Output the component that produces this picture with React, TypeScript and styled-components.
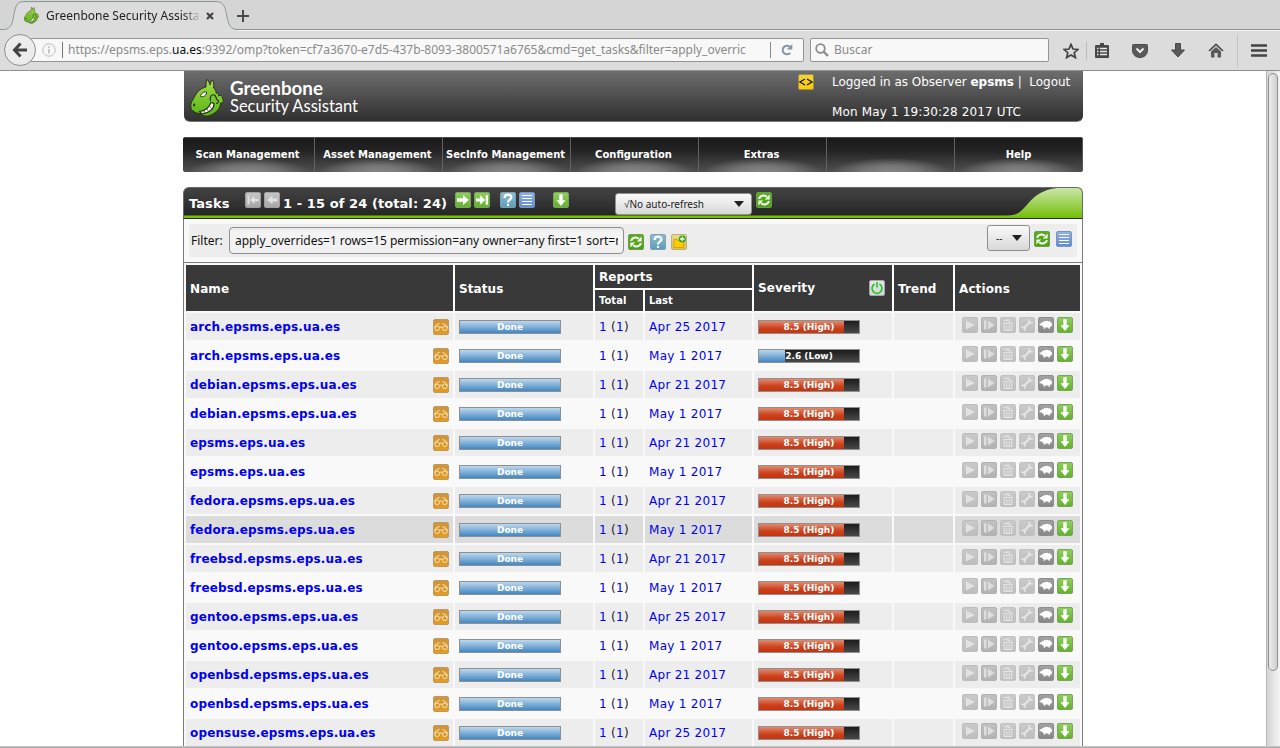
import React from "react";
import styled, { createGlobalStyle } from "styled-components";

const Global = createGlobalStyle`
  * { box-sizing: border-box; }
  html, body { margin: 0; padding: 0; overflow: hidden; background: #fff; }
  body { font-family: "DejaVu Sans", Verdana, sans-serif; font-size: 12px; color: #111; }
`;

const Window = styled.div`
  width: 1280px;
  height: 748px;
  overflow: hidden;
  display: flex;
  flex-direction: column;
`;

/* ---------- browser chrome ---------- */

const TabStrip = styled.div`
  position: relative;
  height: 30px;
  flex: none;
  background: #d5d5d5;
  border-bottom: 1px solid #8f9393;
  font-family: "Noto Sans", sans-serif;
  display: flex;
  align-items: flex-start;
`;

const TabShape = styled.svg`
  position: absolute;
  left: 0;
  top: 0;
`;

const TabContent = styled.div`
  position: relative;
  display: flex;
  align-items: center;
  height: 30px;
  width: 236px;
  padding: 1px 0 0 24px;
`;

const TabTitle = styled.div`
  margin-left: 7px;
  width: 154px;
  overflow: hidden;
  white-space: nowrap;
  font-size: 12px;
  line-height: 18px;
  color: #222;
  mask-image: linear-gradient(90deg, #000 136px, transparent 156px);
`;

const TabClose = styled.svg`
  margin-left: 6px;
`;

const NewTab = styled.svg`
  position: relative;
  margin: 9px 0 0 0;
`;

const Toolbar = styled.div`
  height: 41px;
  flex: none;
  background: #dcdcdc;
  border-top: 1px solid #f2f2f2;
  border-bottom: 1px solid #8f8f8f;
  display: flex;
  align-items: flex-start;
  padding-left: 4px;
  font-family: "Noto Sans", sans-serif;
`;

const BackButton = styled.div`
  position: relative;
  width: 32px;
  height: 32px;
  margin-top: 3px;
  border-radius: 50%;
  border: 1px solid #8f8f8f;
  background: #ececec;
  display: flex;
  align-items: center;
  justify-content: center;
  z-index: 1;
`;

const Field = styled.div<{ $w: number; $ml: number }>`
  width: ${(p) => p.$w}px;
  margin: 7px 0 0 ${(p) => p.$ml}px;
  height: 24px;
  border: 1px solid #949494;
  border-radius: 2px;
  background: #f8f8f8;
  display: flex;
  align-items: center;
  white-space: nowrap;
  font-size: 12px;
  line-height: 24px;
  color: #8a8a8a;
  overflow: hidden;
`;

const Divider = styled.div<{ $h: number; $c: string }>`
  width: 1px;
  height: ${(p) => p.$h}px;
  background: ${(p) => p.$c};
`;

const Url = styled.div`
  width: 696px;
  margin-left: 5px;
  letter-spacing: -0.03px;
  b { font-weight: 400; color: #111; }
`;

const ToolIcons = styled.div`
  flex: 1;
  height: 39px;
  display: flex;
  align-items: center;
  margin-left: 14px;
`;

const Gap = styled.div<{ $w: number }>`
  width: ${(p) => p.$w}px;
  flex: none;
`;

/* ---------- viewport ---------- */

const Viewport = styled.div`
  flex: 1;
  min-height: 0;
  display: flex;
  overflow: hidden;
`;

const PageArea = styled.div`
  width: 1266px;
  height: 677px;
  overflow: hidden;
  padding-left: 183px;
`;

const Content = styled.div`
  width: 900px;
`;

const ScrollTrack = styled.div`
  width: 14px;
  border-left: 1px solid #b5b5b5;
  background: linear-gradient(90deg, #d6d6d6, #f4f4f4);
  padding: 2px 1px 0 1px;
`;

const ScrollThumb = styled.div`
  width: 10px;
  height: 598px;
  border: 1px solid #8d8d8d;
  border-radius: 5px;
  background: linear-gradient(90deg, #ececec, #cfcfcf);
`;

const BottomEdge = styled.div`
  position: fixed;
  left: 0;
  right: 0;
  bottom: 0;
  height: 2px;
  background: linear-gradient(#d0d0d0, #a0a0a0);
`;

/* ---------- header ---------- */

const Banner = styled.header`
  width: 899px;
  margin-left: 1px;
  height: 51px;
  border-radius: 0 0 6px 6px;
  background: linear-gradient(#6d6d6d, #303030);
  border-bottom: 1px solid #777;
  display: flex;
  align-items: flex-start;
  color: #fff;
`;

const Session = styled.div`
  margin-left: 18px;
  padding-top: 2px;
  white-space: nowrap;
  line-height: 18px;
`;

const Login = styled.div`
  letter-spacing: -0.02px;
`;

const Stamp = styled.div`
  margin-top: 12px;
  letter-spacing: 0.15px;
`;

/* ---------- navigation ---------- */

const Nav = styled.nav`
  display: grid;
  grid-template-columns: 132px repeat(6, 128px);
  width: 900px;
  height: 35px;
  margin-top: 15px;
  border-radius: 3px;
  overflow: hidden;
  background: #333;
`;

const NavItem = styled.div`
  border-right: 1px solid #626262;
  border-top: 1px solid #4a4a4a;
  background:
    radial-gradient(ellipse 60px 14px at 50% 100%, #868686 0%, rgba(125, 125, 125, 0.85) 45%, rgba(90, 90, 90, 0) 100%),
    linear-gradient(#1a1a1a, #222 35%, #505050 100%);
  color: #fff;
  font-weight: 700;
  font-size: 10px;
  line-height: 34px;
  text-align: center;
  white-space: nowrap;
  padding-right: 2px;
  &:last-child {
    border-right-color: #555;
    padding-right: 0;
  }
`;

/* ---------- task panel ---------- */

const Panel = styled.section`
  width: 900px;
  margin-top: 15px;
  background: #f9f9f9;
  border-radius: 6px 6px 0 0;
`;

const PanelBar = styled.div`
  height: 32px;
  border-radius: 6px 6px 0 0;
  border: 1px solid #6a6a6a;
  border-bottom: 1px solid #2c2c2c;
  background: linear-gradient(#434343, #262626 27px, #4e7a12 27px, #4e7a12 28px, #78c10c 28px);
  display: flex;
  align-items: flex-start;
  color: #fff;
  font-weight: 700;
  font-size: 13px;
  white-space: nowrap;
  padding-left: 5px;
  overflow: hidden;
`;

const BarText = styled.div<{ $w: number; $ml?: number }>`
  width: ${(p) => p.$w}px;
  margin-left: ${(p) => p.$ml || 0}px;
  padding-top: 7px;
  line-height: 18px;
  letter-spacing: 0.08px;
`;

const Icons = styled.div<{ $ml: number; $mt: number; $gap: number }>`
  display: flex;
  flex: none;
  gap: ${(p) => p.$gap}px;
  margin-left: ${(p) => p.$ml}px;
  margin-top: ${(p) => p.$mt}px;
`;

const Select = styled.div<{ $w: number; $h: number; $ml: number; $mt: number }>`
  flex: none;
  width: ${(p) => p.$w}px;
  height: ${(p) => p.$h}px;
  margin-left: ${(p) => p.$ml}px;
  margin-top: ${(p) => p.$mt}px;
  border: 1px solid #8f8f8f;
  border-radius: 3px;
  background: linear-gradient(#fafafa, #d8d8d8);
  color: #222;
  font: 400 10px/20px "Noto Sans", sans-serif;
  display: flex;
  align-items: center;
  justify-content: space-between;
  padding: 0 7px 0 8px;
`;

const Corner = styled.svg`
  margin-left: auto;
  flex: none;
`;

const FilterArea = styled.div`
  height: 44px;
  border: 1px solid #7d7d7d;
  border-top: 0;
  padding: 5px 5px 0 5px;
`;

const FilterRow = styled.div`
  height: 33px;
  background: #ededed;
  display: flex;
  align-items: flex-start;
  font-family: "Noto Sans", sans-serif;
`;

const FilterLabel = styled.label`
  width: 38px;
  margin-left: 2px;
  line-height: 33px;
  font-size: 12px;
`;

const FilterInput = styled.div`
  width: 395px;
  height: 27px;
  margin-top: 3px;
  border: 1px solid #8f8f8f;
  border-radius: 4px;
  background: linear-gradient(#e8e8e8, #f4f4f4 4px, #f0f0f0);
  padding: 0 5px;
  line-height: 25px;
  font-size: 12px;
  letter-spacing: -0.05px;
`;

const Clip = styled.div`
  overflow: hidden;
  white-space: nowrap;
`;

const Table = styled.div`
  border: 1px solid #7d7d7d;
  border-width: 0 1px;
  padding: 2px 2px 0 2px;
  display: flex;
  flex-direction: column;
  gap: 2px;
`;

const cols = "267px 138px 48px 107px 138px 59px 125px";

const HeadRow = styled.div`
  display: grid;
  grid-template-columns: ${cols};
  grid-template-rows: 23px 21px;
  gap: 2px;
  background: #fff;
`;

const HeadCell = styled.div<{ $area: string; $small?: boolean; $drop?: boolean }>`
  grid-area: ${(p) => p.$area};
  background: #393939;
  color: #fff;
  font-weight: 700;
  font-size: ${(p) => (p.$small ? 10 : 12)}px;
  letter-spacing: ${(p) => (p.$small ? 0 : 0.1)}px;
  display: flex;
  align-items: center;
  justify-content: space-between;
  padding: ${(p) => (p.$drop ? 2 : 0)}px 7px 0 4px;
`;

const Row = styled.div<{ $bg: string }>`
  display: grid;
  grid-template-columns: ${cols};
  column-gap: 2px;
  height: 27px;
  & > div { background: ${(p) => p.$bg}; }
`;

const Cell = styled.div<{ $pt?: number }>`
  display: flex;
  align-items: flex-start;
  padding: ${(p) => p.$pt ?? 6}px 4px 0 4px;
  line-height: 17px;
  white-space: nowrap;
  color: #222;
  letter-spacing: 0.28px;
`;

const Link = styled.a<{ $bold?: boolean }>`
  color: #0000f4;
  font-weight: ${(p) => (p.$bold ? 700 : 400)};
  letter-spacing: ${(p) => (p.$bold ? 0.15 : 0.28)}px;
`;

const Meter = styled.div`
  width: 102px;
  height: 14px;
  border: 1px solid #8f8f8f;
  background: linear-gradient(#1c1c1c, #484848);
  position: relative;
  letter-spacing: 0;
`;

const Fill = styled.div<{ $red?: boolean }>`
  height: 12px;
  background: ${(p) =>
    p.$red ? "linear-gradient(#e08a70, #cc401b 60%, #c53410)" : "linear-gradient(#bcd8ee, #4387c2)"};
`;

const MeterLabel = styled.div`
  position: absolute;
  inset: 0;
  text-align: center;
  color: #fff;
  font-weight: 700;
  font-size: 9px;
  line-height: 12px;
`;

/* ---------- icons ---------- */

type Kind =
  | "first" | "prev" | "next" | "last" | "help" | "list" | "down" | "refresh"
  | "folder" | "glasses" | "power" | "play" | "resume" | "trash" | "wrench" | "sheep" | "code";

const palette: Record<Kind, [string, string, string]> = {
  first: ["#c6c6c6", "#a5a5a5", "#a0a0a0"],
  prev: ["#c6c6c6", "#a5a5a5", "#a0a0a0"],
  next: ["#8fcf5d", "#62b12c", "#7da45f"],
  last: ["#8fcf5d", "#62b12c", "#7da45f"],
  down: ["#8fcf5d", "#62b12c", "#7da45f"],
  help: ["#92bed2", "#5b9cbd", "#7ea1b2"],
  list: ["#8db2ea", "#5e8bd8", "#7f93b8"],
  refresh: ["#56ae18", "#4aa30f", "#6b9c4d"],
  folder: ["#ecd78a", "#e0bd49", "#bbb07c"],
  glasses: ["#cf9338", "#e79b1d", "#b79b6b"],
  power: ["#e6e6e6", "#d4d4d4", "#a5a5a5"],
  play: ["#cacaca", "#bdbdbd", "#bdbdbd"],
  resume: ["#c2c2c2", "#b2b2b2", "#b2b2b2"],
  trash: ["#cacaca", "#bebebe", "#c2c2c2"],
  wrench: ["#cacaca", "#bebebe", "#c2c2c2"],
  sheep: ["#a2a2a2", "#878787", "#8d8d8d"],
  code: ["#f5d23b", "#ffcc00", "#9d9150"],
};

const glyphs: Record<Kind, React.ReactNode> = {
  first: <path fill="#e0e0e0" d="M2.500 3.500h2v9h-2zM13.500 6.700H9.500V4L5 8l4.500 4V9.300H13.500z" />,
  prev: <path fill="#e0e0e0" d="M13.500 6.500H8.500V3.700L3 8l5.500 4.300V9.500H13.500z" />,
  next: <path fill="#fff" d="M2 6.300H8V3L13.800 8L8 13V9.700H2Z" />,
  last: <path fill="#fff" d="M2 6.500H6.200V3.300L11.200 8l-5 4.700V9.500H2zM11.700 3.300h2.200v9.400h-2.200z" />,
  help: (
    <g fill="none" stroke="#fff" strokeWidth="2.200">
      <path d="M4.600 6C4.600 1.600 11.400 1.800 11.400 5.400C11.400 7.700 8 7.700 8 10.600" />
      <path d="M8 11.800v2.200" />
    </g>
  ),
  list: <path stroke="#fff" strokeWidth="1.100" d="M3 3.500h10M3 6.500h10M3 9.500h10M3 12.500h10" />,
  down: <path fill="#fff" d="M6.300 2.200h3.400V8.300h2.800L8 13.900L3.500 8.300H6.300z" />,
  refresh: (
    <g fill="none" stroke="#fff" strokeWidth="2">
      <path d="M3.200 7C3.600 3.400 8.500 2.600 10.800 4.800M12.800 9C12.400 12.600 7.500 13.400 5.200 11.200" />
      <path fill="#fff" stroke="none" d="M13.600 2.600V7.400H8.800zM2.400 13.400V8.600H7.200z" />
    </g>
  ),
  folder: (
    <>
      <path d="M3 6.500V5.500h3.500v1h6v7H3z" fill="#fc0" stroke="#d8a600" />
      <circle cx="11.300" cy="5" r="3.500" fill="#1fae1f" />
      <path d="M11.300 2.800v4.400M9.100 5h4.400" stroke="#fff" strokeWidth="1.400" />
    </>
  ),
  glasses: (
    <g fill="none" stroke="#fbe6bf" strokeWidth="1">
      <path d="M1.500 8.500C2 6.500 4.500 5 6.500 4.500M14.500 8.500C14 6.500 11.500 5 9.500 4.500M6.500 8.500Q8 7.500 9.500 8.500" />
      <circle cx="4.200" cy="9.300" r="2.300" />
      <circle cx="11.800" cy="9.300" r="2.300" />
    </g>
  ),
  power: (
    <g fill="none" stroke="#17c51c" strokeWidth="1.500">
      <path d="M5.600 4A5 5 0 1 0 10.400 4M8 2v5.500" />
    </g>
  ),
  play: <path fill="#e2e2e2" d="M4 3.500L13 8L4 12.500z" />,
  resume: <path fill="#dedede" d="M3 3.500h2.500v9H3zM7 3.500L13.500 8L7 12.500z" />,
  trash: (
    <g fill="none" stroke="#e4e4e4" strokeWidth="1.200">
      <path d="M3 6.500h10M4.200 7.500v6h7.600v-6M6.700 8v5M9.300 8v5M3.800 3l7.500 2.300M7 2.500l2.500.8" />
    </g>
  ),
  wrench: (
    <g fill="none" stroke="#e6e6e6">
      <path strokeWidth="2" d="M4.500 11.500L11.500 4.500" />
      <path strokeWidth="1.600" d="M10.300 2.300v3.400h3.400M2.300 10.300h3.400v3.400" />
    </g>
  ),
  sheep: (
    <path
      fill="#fff"
      d="M1.400 6.800L3.300 6.200Q4 4.800 5.300 5Q6.200 3.600 7.800 4.300Q9.300 3.200 10.500 4.400Q12.400 4.100 13 5.800Q14.800 6.500 14 8Q14 9.700 12 10L11.700 11.800H10.600L10.300 10.500H7.300L7 11.800H5.900L5.500 10Q4.300 9.700 4 8.500L1.800 8.300z"
    />
  ),
  code: <path fill="none" stroke="#201c05" strokeWidth="1.400" d="M7 5L2 8L7 11M9 5l5 3L9 11" />,
};

const IconSvg = styled.svg`
  display: block;
  flex: none;
`;

function Icon({ kind }: { kind: Kind }) {
  const [a, b, edge] = palette[kind];
  return (
    <IconSvg width="16" height="16" viewBox="0 0 16 16">
      <defs>
        <linearGradient id={`g-${kind}`} x1="0" y1="0" x2="0" y2="1">
          <stop offset="0" stopColor={a} />
          <stop offset="1" stopColor={b} />
        </linearGradient>
      </defs>
      <rect x=".5" y=".5" width="15" height="15" rx="1.500" fill={`url(#g-${kind})`} stroke={edge} />
      {glyphs[kind]}
    </IconSvg>
  );
}

const Caret = () => (
  <svg width="10" height="6" viewBox="0 0 10 6">
    <path d="M0 0H10L5 6z" fill="#222" />
  </svg>
);

const DragonSvg = styled.svg`
  flex: none;
`;

function Dragon({ size }: { size: number }) {
  return (
    <DragonSvg width={size} height={(size * 38) / 34} viewBox="0 0 34 38">
      <defs>
        <linearGradient id="dragon" x1="0" y1="0" x2="0" y2="1">
          <stop offset="0" stopColor="#a4dc4a" />
          <stop offset="1" stopColor="#57b512" />
        </linearGradient>
      </defs>
      <path
        d="M1 28C0 24 3 21 5 17C8 11 12 9 16 8C16 5 16 3 17 .5C18.500 2 19.500 4 20 6C20.500 4 21 2.500 22.500 1C24 3.500 24 6 23.500 9C25.500 10.500 26 12 26 14C28 14 29 15 28.500 17C31 15.500 33 17 32 19C34.500 21 33 24.500 30.500 24C30.500 29 27 33 22 35.500C18 38 13 37.500 11 34.500C8 34.500 5 34 3.500 32C1.500 31.500 1 30 1 28Z"
        fill="url(#dragon)"
        stroke="#222c12"
        strokeWidth=".9"
      />
      <path d="M9.500 32.500C14 32 19 29 21 23.500L24 24.500C24.500 29 19 34.500 13 34.500C11 34.500 10 33.500 9.500 32.500Z" fill="#fff" stroke="#20280f" strokeWidth="1.100" />
      <path d="M14 31.500l.8 2.500M17 30l1.200 2.500M19.500 27.500l2.200 1.800" stroke="#444" strokeWidth=".7" />
      <path d="M10.500 17.500C11 14.500 13.500 12.500 16.500 13C17 16 13.500 18.500 10.500 17.500z" fill="#fff" stroke="#20280f" strokeWidth=".9" />
      <path d="M20.500 22C19 18 22 14 25 16.500C27 18.500 25.500 20 27.500 21C29.500 22 28.500 24 26 24.500" fill="none" stroke="#20280f" strokeWidth="1.100" />
      <ellipse cx="4.200" cy="26" rx="1" ry="1.400" fill="#20280f" />
    </DragonSvg>
  );
}

/* ---------- data ---------- */

const hosts = ["arch.epsms", "debian.epsms", "epsms", "fedora.epsms", "freebsd.epsms", "gentoo.epsms", "openbsd.epsms", "opensuse.epsms"];
const firstScan = ["Apr 25 2017", "Apr 21 2017", "Apr 21 2017", "Apr 21 2017", "Apr 21 2017", "Apr 25 2017", "Apr 21 2017", "Apr 25 2017"];

const tasks = Array.from({ length: 15 }, (_, i) => {
  const h = Math.floor(i / 2);
  return {
    name: `${hosts[h]}.eps.ua.es`,
    last: i % 2 ? "May 1 2017" : firstScan[h],
    score: i === 1 ? 2.6 : 8.5,
    active: i === 7,
  };
});

const actions: Kind[] = ["play", "resume", "trash", "wrench", "sheep", "down"];
const menu = ["Scan Management", "Asset Management", "SecInfo Management", "Configuration", "Extras", "", "Help"];

const NameCell = styled(Cell)`
  justify-content: space-between;
`;

function TaskRow({ i }: { i: number }) {
  const t = tasks[i];
  const high = t.score > 7;
  return (
    <Row $bg={t.active ? "#dcdcdc" : i % 2 ? "#f9f9f9" : "#ededed"}>
      <NameCell>
        <Link $bold>{t.name}</Link>
        <Icon kind="glasses" />
      </NameCell>
      <Cell $pt={7}>
        <Meter>
          <Fill />
          <MeterLabel>Done</MeterLabel>
        </Meter>
      </Cell>
      <Cell>
        <Link>1</Link>&nbsp;(<Link>1</Link>)
      </Cell>
      <Cell>
        <Link>{t.last}</Link>
      </Cell>
      <Cell $pt={7}>
        <Meter>
          <Fill $red={high} style={{ width: `${t.score * 10}%` }} />
          <MeterLabel>{`${t.score} (${high ? "High" : "Low"})`}</MeterLabel>
        </Meter>
      </Cell>
      <Cell />
      <Cell $pt={4}>
        <Icons $ml={3} $mt={0} $gap={3}>
          {actions.map((a) => (
            <Icon key={a} kind={a} />
          ))}
        </Icons>
      </Cell>
    </Row>
  );
}

export default function App() {
  return (
    <Window>
      <Global />
      <TabStrip>
        <TabShape width="240" height="31">
          <path
            d="M0 29.500H3C11 29.500 12 24 13.500 17C15 8 16 2.500 24 2.500H216C224 2.500 225.500 8 227 17C228.500 24 230 29.500 238 29.500V31H0Z"
            fill="#dcdcdc"
          />
          <path
            d="M0 29.500H3C11 29.500 12 24 13.500 17C15 8 16 1.500 24 1.500H216C224 1.500 225.500 8 227 17C228.500 24 230 29.500 238 29.500"
            fill="none"
            stroke="#8f9898"
          />
        </TabShape>
        <TabContent>
          <Dragon size={15} />
          <TabTitle>Greenbone Security Assistant</TabTitle>
          <TabClose width="8" height="8">
            <path d="M1 1L7 7M7 1L1 7" stroke="#444" strokeWidth="2.200" />
          </TabClose>
        </TabContent>
        <NewTab width="14" height="14">
          <path d="M7 1V13M1 7H13" stroke="#4a4a4a" strokeWidth="2" />
        </NewTab>
      </TabStrip>

      <Toolbar>
        <BackButton>
          <svg width="16" height="16" viewBox="0 0 16 16">
            <path d="M8.500 1.500L2.500 8L8.500 14.500M3 8H15" fill="none" stroke="#444" strokeWidth="3" />
          </svg>
        </BackButton>
        <Field $w={774} $ml={-6}>
          <Gap $w={11} />
          <svg width="14" height="14" viewBox="0 0 14 14">
            <circle cx="7" cy="7" r="6.200" fill="none" stroke="#bdbdbd" />
            <path d="M7 6v4.500M7 3.500v1.500" stroke="#b0b0b0" strokeWidth="1.400" />
          </svg>
          <Gap $w={6} />
          <Divider $h={16} $c="#777" />
          <Url>
            https://epsms.eps.<b>ua.es</b>:9392/omp?token=cf7a3670-e7d5-437b-8093-3800571a6765&amp;cmd=get_tasks&amp;filter=apply_overric
          </Url>
          <Gap $w={6} />
          <Divider $h={16} $c="#8a8a8a" />
          <Gap $w={10} />
          <svg width="12" height="12" viewBox="0 0 12 12">
            <path d="M9.300 8.800A4.300 4.300 0 1 1 8.800 2.800" fill="none" stroke="#8796a5" strokeWidth="2" />
            <path d="M11.300 0V5.600H5.700z" fill="#8796a5" />
          </svg>
        </Field>
        <Field $w={239} $ml={6}>
          <Gap $w={4} />
          <svg width="14" height="14" viewBox="0 0 14 14">
            <circle cx="5.500" cy="5.500" r="4.300" fill="none" stroke="#8c8c8c" strokeWidth="1.800" />
            <path d="M8.500 8.500L13 13" stroke="#8c8c8c" strokeWidth="2.400" />
          </svg>
          <Gap $w={5} />
          Buscar
        </Field>
        <ToolIcons>
          <svg width="16" height="16" viewBox="0 0 16 16">
            <path d="M8 1.300L10 6L15 6.400L11.200 9.700L12.400 14.600L8 12L3.600 14.600L4.800 9.700L1 6.400L6 6Z" fill="none" stroke="#444" strokeWidth="1.700" />
          </svg>
          <Gap $w={7} />
          <Divider $h={18} $c="#bbb" />
          <Gap $w={8} />
          <svg width="14" height="15" viewBox="0 0 14 15">
            <path d="M5 0H9V2H13Q14 2 14 3V14Q14 15 13 15H1Q0 15 0 14V3Q0 2 1 2H5Z" fill="#484848" />
            <path d="M2 5.500h1.500M5 5.500h7M2 8.500h1.500M5 8.500h7M2 11.500h1.500M5 11.500h7" stroke="#e8e8e8" strokeWidth="1.600" />
          </svg>
          <Gap $w={23} />
          <svg width="16" height="14" viewBox="0 0 16 14">
            <path d="M1.500 .5H14.500Q15.500 .5 15.500 1.500V6C15.500 16 .5 16 .5 6V1.500Q.5 .5 1.500 .5Z" fill="#5a5a5a" stroke="#4a4a4a" />
            <path d="M4.500 4.500L8 8L11.500 4.500" fill="none" stroke="#eee" strokeWidth="2" />
          </svg>
          <Gap $w={23} />
          <svg width="14" height="15" viewBox="0 0 14 15">
            <path d="M4.500 0.500H9.500V7H13.500L7 14L.5 7H4.500Z" fill="#5a5a5a" stroke="#4a4a4a" />
          </svg>
          <Gap $w={23} />
          <svg width="16" height="15" viewBox="0 0 16 15">
            <path d="M1 8L8 1.500L15 8" fill="none" stroke="#4a4a4a" strokeWidth="1.700" />
            <path d="M3 8.500L8 4L13 8.500V14.500H9.500V10H6.500V14.500H3Z" fill="#5a5a5a" />
          </svg>
          <Gap $w={13} />
          <Divider $h={34} $c="#c4c4c4" />
          <Gap $w={13} />
          <svg width="16" height="14">
            <path d="M0 1.500H16M0 6.500H16M0 11.500H16" stroke="#444" strokeWidth="2.600" />
          </svg>
        </ToolIcons>
      </Toolbar>

      <Viewport>
        <PageArea>
          <Content>
            <Banner>
              <svg width="614" height="50" viewBox="0 0 614 50">
                <g transform="translate(6 8)">
                  <Dragon size={34} />
                </g>
                <text x="46" y="24" fill="#fff" fontFamily="Lato, sans-serif" fontWeight="700" fontSize="18.500" textLength="93" lengthAdjust="spacingAndGlyphs">
                  Greenbone
                </text>
                <text x="46" y="40.500" fill="#fff" fontFamily="Lato, sans-serif" fontSize="17.500" textLength="128" lengthAdjust="spacingAndGlyphs">
                  Security Assistant
                </text>
              </svg>
              <Icons $ml={0} $mt={3} $gap={0}>
                <Icon kind="code" />
              </Icons>
              <Session>
                <Login>
                  Logged in as Observer <b>epsms</b> | &nbsp;Logout
                </Login>
                <Stamp>Mon May 1 19:30:28 2017 UTC</Stamp>
              </Session>
            </Banner>

            <Nav>
              {menu.map((m, i) => (
                <NavItem key={i}>{m}</NavItem>
              ))}
            </Nav>

            <Panel>
              <PanelBar>
                <BarText $w={56}>Tasks</BarText>
                <Icons $ml={0} $mt={4} $gap={3}>
                  <Icon kind="first" />
                  <Icon kind="prev" />
                </Icons>
                <BarText $w={164} $ml={3}>1 - 15 of 24 (total: 24)</BarText>
                <Icons $ml={8} $mt={4} $gap={3}>
                  <Icon kind="next" />
                  <Icon kind="last" />
                </Icons>
                <Icons $ml={10} $mt={4} $gap={3}>
                  <Icon kind="help" />
                  <Icon kind="list" />
                </Icons>
                <Icons $ml={18} $mt={4} $gap={0}>
                  <Icon kind="down" />
                </Icons>
                <Select $w={137} $h={22} $ml={46} $mt={5}>
                  √No auto-refresh
                  <Caret />
                </Select>
                <Icons $ml={4} $mt={4} $gap={0}>
                  <Icon kind="refresh" />
                </Icons>
                <Corner width="76" height="30" viewBox="0 0 76 30">
                  <defs>
                    <linearGradient id="corner" x1="0" y1="0" x2="0" y2="1">
                      <stop offset="0" stopColor="#cbe6a8" />
                      <stop offset="1" stopColor="#74bf08" />
                    </linearGradient>
                  </defs>
                  <path d="M0 28C24 28 18 4 51 0H76V30H0Z" fill="url(#corner)" />
                </Corner>
              </PanelBar>

              <FilterArea>
                <FilterRow>
                  <FilterLabel>Filter:</FilterLabel>
                  <FilterInput>
                    <Clip>apply_overrides=1 rows=15 permission=any owner=any first=1 sort=name</Clip>
                  </FilterInput>
                  <Icons $ml={4} $mt={10} $gap={6}>
                    <Icon kind="refresh" />
                    <Icon kind="help" />
                  </Icons>
                  <Icons $ml={5} $mt={10} $gap={0}>
                    <Icon kind="folder" />
                  </Icons>
                  <Select $w={43} $h={26} $ml={300} $mt={1}>
                    --
                    <Caret />
                  </Select>
                  <Icons $ml={4} $mt={7} $gap={6}>
                    <Icon kind="refresh" />
                    <Icon kind="list" />
                  </Icons>
                </FilterRow>
              </FilterArea>

              <Table>
                <HeadRow>
                  <HeadCell $area="1 / 1 / 3 / 2" $drop>Name</HeadCell>
                  <HeadCell $area="1 / 2 / 3 / 3" $drop>Status</HeadCell>
                  <HeadCell $area="1 / 3 / 2 / 5">Reports</HeadCell>
                  <HeadCell $area="2 / 3 / 3 / 4" $small>Total</HeadCell>
                  <HeadCell $area="2 / 4 / 3 / 5" $small>Last</HeadCell>
                  <HeadCell $area="1 / 5 / 3 / 6">
                    Severity
                    <Icon kind="power" />
                  </HeadCell>
                  <HeadCell $area="1 / 6 / 3 / 7" $drop>Trend</HeadCell>
                  <HeadCell $area="1 / 7 / 3 / 8" $drop>Actions</HeadCell>
                </HeadRow>
                {tasks.map((_, i) => (
                  <TaskRow key={i} i={i} />
                ))}
              </Table>
            </Panel>
          </Content>
        </PageArea>
        <ScrollTrack>
          <ScrollThumb />
        </ScrollTrack>
      </Viewport>
      <BottomEdge />
    </Window>
  );
}
